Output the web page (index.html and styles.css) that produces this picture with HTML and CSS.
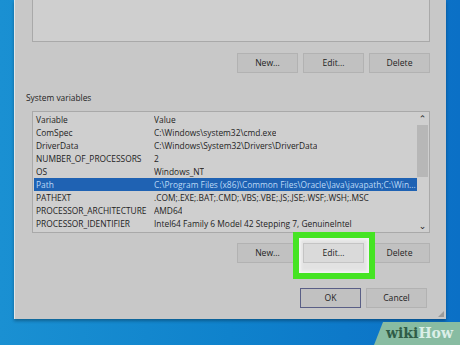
FILE: index.html
```html
<!DOCTYPE html>
<html lang="en">
<head>
  <meta charset="UTF-8" />
  <meta name="viewport" content="width=device-width, initial-scale=1.0" />
  <title>Environment Variables</title>
  <link rel="stylesheet" href="styles.css">
</head>
<body>
  <div class="dialog">
    <div class="list list-top"></div>

    <div class="btn-row">
      <button class="btn">New...</button>
      <button class="btn">Edit...</button>
      <button class="btn">Delete</button>
    </div>

    <div class="group-label">System variables</div>

    <div class="list list-sys">
      <div class="rows">
        <div class="row"><span class="var">Variable</span><span class="val">Value</span></div>
        <div class="row"><span class="var">ComSpec</span><span class="val">C:\Windows\system32\cmd.exe</span></div>
        <div class="row"><span class="var">DriverData</span><span class="val">C:\Windows\System32\Drivers\DriverData</span></div>
        <div class="row"><span class="var">NUMBER_OF_PROCESSORS</span><span class="val">2</span></div>
        <div class="row"><span class="var">OS</span><span class="val">Windows_NT</span></div>
        <div class="row selected"><span class="var">Path</span><span class="val">C:\Program Files (x86)\Common Files\Oracle\Java\javapath;C:\Win...</span></div>
        <div class="row"><span class="var">PATHEXT</span><span class="val">.COM;.EXE;.BAT;.CMD;.VBS;.VBE;.JS;.JSE;.WSF;.WSH;.MSC</span></div>
        <div class="row"><span class="var">PROCESSOR_ARCHITECTURE</span><span class="val">AMD64</span></div>
        <div class="row"><span class="var">PROCESSOR_IDENTIFIER</span><span class="val">Intel64 Family 6 Model 42 Stepping 7, GenuineIntel</span></div>
      </div>
      <div class="scrollbar">
        <span class="arrow">&#8963;</span>
        <span class="thumb"></span>
        <span class="track"></span>
        <span class="arrow">&#8964;</span>
      </div>
    </div>

    <div class="btn-row btn-row-sys">
      <button class="btn">New...</button>
      <button class="btn btn-focus">Edit...</button>
      <button class="btn">Delete</button>
    </div>

    <div class="btn-row btn-row-footer">
      <button class="btn btn-default">OK</button>
      <button class="btn">Cancel</button>
    </div>

    <div class="highlight"></div>
    <div class="grip"></div>
  </div>

  <div class="logo"><span class="wiki">wiki</span><span class="how">How</span></div>
</body>
</html>
```

FILE: styles.css
```css
:root {
  --dialog-bg: #c8c8c8;
  --list-bg: #cfcfcf;
  --border: #a9a9a9;
  --btn-bg: #c1c1c1;
  --text: #1e1e1e;
  --select: #1f62b3;
  --green: #45e423;
}

* {
  box-sizing: border-box;
  font-family: 'Open Sans', 'Noto Sans', sans-serif;
}

body {
  margin: 0;
  width: 460px;
  height: 345px;
  overflow: hidden;
  background: linear-gradient(90deg, #1a90d2 0%, #0f82cc 50%, #0b70c6 100%);
  position: relative;
}

.dialog {
  position: relative;
  margin-left: 14px;
  width: 432px;
  height: 319px;
  padding: 0 16px 0 17px;
  background: var(--dialog-bg);
  border-left: 1px solid #e2e6e8;
  box-shadow: 0 2px 3px rgba(0, 0, 0, 0.3);
  color: var(--text);
  font-size: 8.4px;
}

.list {
  background: var(--list-bg);
  border: 1px solid var(--border);
}

.list-top {
  height: 42px;
  border-top: none;
}

.btn-row {
  display: flex;
  justify-content: flex-end;
  gap: 5px;
  margin-top: 11px;
}

.btn {
  width: 61px;
  height: 20px;
  padding: 0;
  background: var(--btn-bg);
  border: 1px solid #b2b2b2;
  color: var(--text);
  font-size: 8.6px;
}

.group-label {
  margin: 18px 0 0 -6px;
  line-height: 13px;
}

.list-sys {
  display: flex;
  height: 122px;
  margin-top: 7px;
  padding: 1px 1px 0 1px;
}

.rows {
  flex: 1;
}

.row {
  display: flex;
  height: 13px;
  line-height: 13px;
  padding-left: 2px;
  white-space: nowrap;
}

.var {
  width: 118px;
  flex-shrink: 0;
}

.val {
  overflow: hidden;
}

.selected {
  background: var(--select);
  color: #bcd9f6;
}

.scrollbar {
  width: 11px;
  display: flex;
  flex-direction: column;
  align-items: center;
}

.arrow {
  height: 12px;
  line-height: 12px;
  font-size: 9px;
  font-family: 'DejaVu Sans', sans-serif;
  color: #222;
}

.thumb {
  width: 100%;
  height: 52px;
  background: #b7b7b7;
}

.track {
  flex: 1;
}

.btn-row-sys {
  margin-top: 10px;
}

.btn-focus {
  position: relative;
  z-index: 1;
  background: #dadada;
  border-color: #c4c4c4;
}

.btn-row-footer {
  margin-top: 25px;
  padding-right: 3px;
}

.btn-default {
  border: 1px solid #5a5f86;
}

.highlight {
  position: absolute;
  left: 278px;
  top: 232px;
  width: 82px;
  height: 47px;
  border: 6px solid var(--green);
  background: #e2e2e2;
  box-shadow: inset 0 0 3px 2px #f4f4f4;
}

.grip {
  position: absolute;
  right: 2px;
  bottom: 2px;
  width: 6px;
  height: 6px;
  background: radial-gradient(circle, #8a8a8a 0.6px, transparent 1px) 0 0 / 2px 2px;
  clip-path: polygon(100% 0, 100% 100%, 0 100%);
}

.logo {
  position: absolute;
  right: 0;
  bottom: 0;
  width: 86px;
  height: 23px;
  padding: 3px 0 0 12px;
  background: #88bca2;
  clip-path: polygon(9px 0, 100% 0, 100% 100%, 0 100%);
  font-family: 'DejaVu Serif', serif;
  font-weight: bold;
  font-size: 14px;
  line-height: 17px;
}

.wiki {
  font-family: inherit;
  color: #2f5c47;
}

.how {
  font-family: inherit;
  color: #dcefe8;
}
```
